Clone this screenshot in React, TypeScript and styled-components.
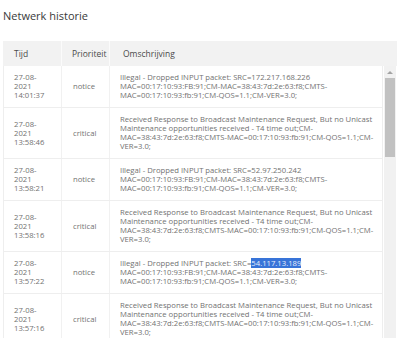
import React from 'react';
import styled, { createGlobalStyle } from 'styled-components';

const GlobalStyle = createGlobalStyle`
  body {
    margin: 0;
    background: #ffffff;
    font-family: "Open Sans", Lato, sans-serif;
  }
`;

const Page = styled.div`
  width: 400px;
  height: 338px;
  overflow: hidden;
  padding: 0 3px;
  box-sizing: border-box;
`;

const Title = styled.h2`
  margin: 0;
  padding-top: 9px;
  height: 41px;
  box-sizing: border-box;
  font-size: 11px;
  font-weight: 400;
  color: #3a3a3a;
  line-height: 14px;
`;

const HeadRow = styled.div`
  display: grid;
  grid-template-columns: 59px 48px 1fr;
  height: 25px;
  background: #f2f2f2;
`;

const HeadCell = styled.div<{ $pad: number }>`
  display: flex;
  align-items: center;
  padding-left: ${(p) => p.$pad}px;
  font-size: 8.5px;
  color: #4a4a4a;
  border-right: 1px solid #fbfbfb;
  &:last-child {
    border-right: none;
  }
`;

const BodyArea = styled.div`
  display: flex;
  gap: 1px;
`;

const Rows = styled.div`
  width: 380px;
  border-left: 1px solid #eeeeee;
  border-right: 1px solid #eeeeee;
  box-sizing: border-box;
`;

const Row = styled.div`
  display: grid;
  grid-template-columns: 58px 48px 1fr;
  border-bottom: 1px solid #eeeeee;
`;

const Cell = styled.div<{ $pad: number }>`
  display: flex;
  flex-direction: column;
  justify-content: center;
  padding: 7px 0 7px ${(p) => p.$pad}px;
  font-size: 7.7px;
  line-height: 9px;
  color: #727272;
  border-right: 1px solid #f1f1f1;
  &:last-child {
    border-right: none;
  }
`;

const Line = styled.span`
  display: block;
  white-space: nowrap;
`;

const Marked = styled.span`
  background: #3874d8;
  color: #e8eefb;
`;

const Scrollbar = styled.div`
  width: 12px;
  height: 290px;
  background: #f1f1f1;
  display: flex;
  flex-direction: column;
`;

const ArrowButton = styled.div`
  height: 12px;
  display: flex;
  align-items: center;
  justify-content: center;
  &::after {
    content: '';
    width: 0;
    height: 0;
    border-left: 3px solid transparent;
    border-right: 3px solid transparent;
    border-bottom: 3px solid #a3a3a3;
  }
`;

const Thumb = styled.div`
  height: 79px;
  margin: 0 1px;
  background: #c1c1c1;
`;

type Entry = {
  time: string;
  level: string;
  src?: React.ReactNode;
};

const entries: Entry[] = [
  { time: '14:01:37', level: 'notice', src: '172.217.168.226' },
  { time: '13:58:46', level: 'critical' },
  { time: '13:58:21', level: 'notice', src: '52.97.250.242' },
  { time: '13:58:16', level: 'critical' },
  { time: '13:57:22', level: 'notice', src: <Marked>54.117.13.189</Marked> },
  { time: '13:57:16', level: 'critical' },
];

const describe = (e: Entry) =>
  e.level === 'notice'
    ? [
        <>Illegal - Dropped INPUT packet: SRC={e.src}</>,
        'MAC=00:17:10:93:FB:91;CM-MAC=38:43:7d:2e:63:f8;CMTS-',
        'MAC=00:17:10:93:fb:91;CM-QOS=1.1;CM-VER=3.0;',
      ]
    : [
        'Received Response to Broadcast Maintenance Request, But no Unicast',
        'Maintenance opportunities received - T4 time out;CM-',
        'MAC=38:43:7d:2e:63:f8;CMTS-MAC=00:17:10:93:fb:91;CM-QOS=1.1;CM-',
        'VER=3.0;',
      ];

const App = () => (
  <Page>
    <GlobalStyle />
    <Title>Netwerk historie</Title>
    <HeadRow>
      <HeadCell $pad={11}>Tijd</HeadCell>
      <HeadCell $pad={10}>Prioriteit</HeadCell>
      <HeadCell $pad={13}>Omschrijving</HeadCell>
    </HeadRow>
    <BodyArea>
      <Rows>
        {entries.map((e) => (
          <Row key={e.time}>
            <Cell $pad={10}>
              <Line>27-08-</Line>
              <Line>2021</Line>
              <Line>{e.time}</Line>
            </Cell>
            <Cell $pad={11}>
              <Line>{e.level}</Line>
            </Cell>
            <Cell $pad={10}>
              {describe(e).map((l, i) => (
                <Line key={i}>{l}</Line>
              ))}
            </Cell>
          </Row>
        ))}
      </Rows>
      <Scrollbar>
        <ArrowButton />
        <Thumb />
      </Scrollbar>
    </BodyArea>
  </Page>
);

export default App;
